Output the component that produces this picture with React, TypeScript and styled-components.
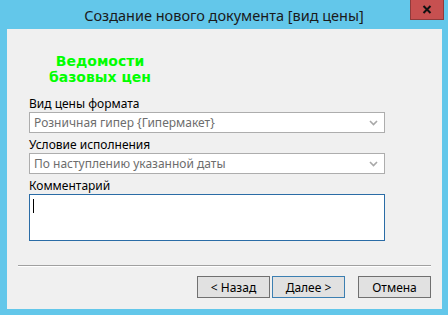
import React from "react";
import styled, { createGlobalStyle } from "styled-components";

const GlobalStyle = createGlobalStyle`
  html, body {
    margin: 0;
    padding: 0;
    width: 448px;
    height: 315px;
    overflow: hidden;
    background: #63c7ea;
  }
`;

const Window = styled.div`
  width: 448px;
  height: 315px;
  background: #63c7ea;
  display: flex;
  flex-direction: column;
  font-family: "Noto Sans", "Open Sans", sans-serif;
`;

const TitleBar = styled.div`
  height: 29px;
  display: grid;
  grid-template-columns: 1fr auto 1fr;
  align-items: start;
`;

const TitleText = styled.div`
  grid-column: 2;
  font-size: 14.5px;
  line-height: 20px;
  padding-top: 5px;
  color: #1a1a1a;
  white-space: nowrap;
`;

const CloseButton = styled.div`
  grid-column: 3;
  justify-self: end;
  margin-right: 4px;
  width: 32px;
  height: 19px;
  background: #c75050;
  border: 1px solid #8f3b3b;
  border-top: none;
  display: flex;
  align-items: center;
  justify-content: center;
`;

const Client = styled.div`
  margin: 0 6px 6px 7px;
  flex: 1;
  background: #f0f0f0;
  display: flex;
  flex-direction: column;
`;

const Heading = styled.div`
  margin-top: 24px;
  width: 186px;
  text-align: center;
  color: #00ff00;
  font-family: "DejaVu Sans", Verdana, sans-serif;
  font-weight: bold;
  font-size: 14px;
  line-height: 16px;
`;

const Form = styled.div`
  margin: 11px 0 0 22px;
  width: 356px;
  display: flex;
  flex-direction: column;
`;

const Label = styled.div`
  font-size: 12px;
  line-height: 16px;
  color: #000;
  height: 16px;
`;

const SelectBox = styled.div`
  box-sizing: border-box;
  height: 21px;
  margin-bottom: 4px;
  border: 1px solid #adadad;
  background: #fff;
  display: flex;
  align-items: center;
  padding: 0 6px 0 4px;
  font-size: 12px;
  color: #6d6d6d;
`;

const SelectValue = styled.span`
  flex: 1;
  white-space: nowrap;
`;

const CommentBox = styled.div`
  box-sizing: border-box;
  height: 47px;
  border: 1px solid #2a6ca6;
  background: #fff;
  padding: 4px 0 0 3px;
`;

const Caret = styled.div`
  width: 1px;
  height: 14px;
  background: #000;
`;

const Separator = styled.div`
  margin: 24px 11px 0 11px;
  height: 1px;
  background: #a0a0a0;
  border-bottom: 1px solid #ffffff;
`;

const ButtonRow = styled.div`
  margin: 9px 11px 0 0;
  display: flex;
  justify-content: flex-end;
  gap: 2px;
`;

const Button = styled.div<{ $primary?: boolean; $gapBefore?: boolean }>`
  box-sizing: border-box;
  width: 73px;
  height: 22px;
  margin-left: ${({ $gapBefore }) => ($gapBefore ? "11px" : "0")};
  background: #e1e1e1;
  border: 1px solid ${({ $primary }) => ($primary ? "#3c7fb1" : "#707070")};
  display: flex;
  align-items: center;
  justify-content: center;
  font-size: 12px;
  color: #000;
`;

const Chevron = () => (
  <svg width="9" height="6" viewBox="0 0 9 6">
    <path d="M1 1 L4.5 4.5 L8 1" fill="none" stroke="#a8a8a8" strokeWidth="1.6" />
  </svg>
);

const CrossIcon = () => (
  <svg width="10" height="9" viewBox="0 0 10 9">
    <path d="M1.5 1 L8.5 8 M8.5 1 L1.5 8" stroke="#111" strokeWidth="2" />
  </svg>
);

export default function App() {
  return (
    <>
      <GlobalStyle />
      <Window>
        <TitleBar>
          <TitleText>Создание нового документа [вид цены]</TitleText>
          <CloseButton>
            <CrossIcon />
          </CloseButton>
        </TitleBar>
        <Client>
          <Heading>
            Ведомости
            <br />
            базовых цен
          </Heading>
          <Form>
            <Label>Вид цены формата</Label>
            <SelectBox>
              <SelectValue>Розничная гипер {"{Гипермакет}"}</SelectValue>
              <Chevron />
            </SelectBox>
            <Label>Условие исполнения</Label>
            <SelectBox>
              <SelectValue>По наступлению указанной даты</SelectValue>
              <Chevron />
            </SelectBox>
            <Label>Комментарий</Label>
            <CommentBox>
              <Caret />
            </CommentBox>
          </Form>
          <Separator />
          <ButtonRow>
            <Button>&lt; Назад</Button>
            <Button $primary>Далее &gt;</Button>
            <Button $gapBefore>Отмена</Button>
          </ButtonRow>
        </Client>
      </Window>
    </>
  );
}
